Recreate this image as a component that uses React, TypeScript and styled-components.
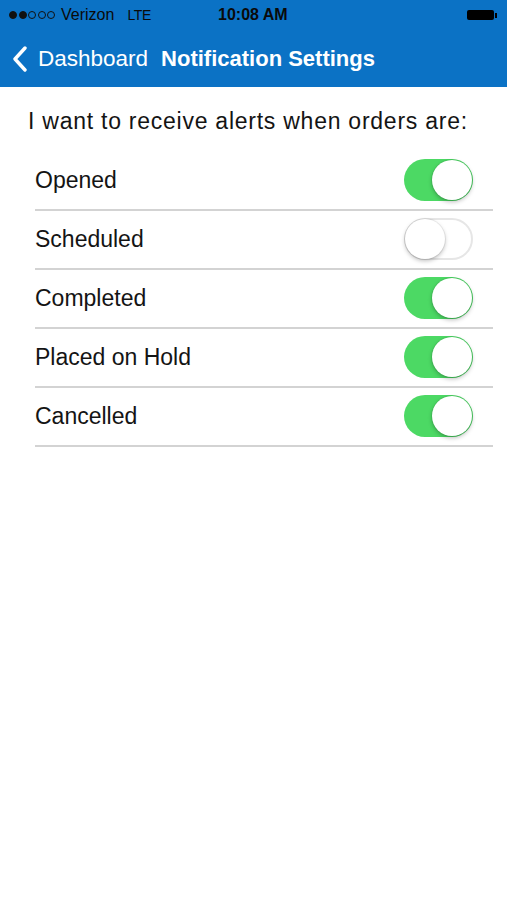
import { useState } from 'react';
import styled, { createGlobalStyle } from 'styled-components';

const GlobalStyle = createGlobalStyle`
  html, body { margin: 0; padding: 0; background: #ffffff; }
  body { font-family: "Liberation Sans", Arial, sans-serif; }
`;

const Screen = styled.div`
  width: 507px;
  height: 900px;
  background: #ffffff;
  display: flex;
  flex-direction: column;
`;

const Header = styled.header`
  background: #0b72c5;
  height: 87px;
  display: flex;
  flex-direction: column;
`;

const StatusBar = styled.div`
  height: 30px;
  display: flex;
  align-items: center;
  padding: 0 10px 0 9px;
  color: #0a0a0a;
  font-size: 16px;
`;

const Carrier = styled.div`
  display: flex;
  align-items: center;
  width: 209px;
`;

const Dot = styled.span<{ $filled: boolean }>`
  width: 8px;
  height: 8px;
  border-radius: 50%;
  box-sizing: border-box;
  border: 1px solid #111;
  background: ${p => (p.$filled ? '#111' : 'transparent')};
`;

const Dots = styled.div`
  display: flex;
  align-items: center;
  gap: 1.5px;
  margin-right: 6px;
`;

const Network = styled.span`
  margin-left: 13px;
  font-size: 14px;
  letter-spacing: -0.3px;
`;

const Time = styled.div`
  font-weight: bold;
  font-size: 16px;
  flex: 1;
`;

const Battery = styled.div`
  display: flex;
  align-items: center;
`;

const BatteryBody = styled.div`
  width: 27px;
  height: 10px;
  background: #000;
  border-radius: 2px;
`;

const BatteryTip = styled.div`
  width: 2px;
  height: 5px;
  background: #000;
  margin-left: 1px;
`;

const NavBar = styled.nav`
  flex: 1;
  display: flex;
  align-items: center;
  padding: 0 0 0 12px;
  color: #ffffff;
  font-size: 22.5px;
`;

const Back = styled.div`
  display: flex;
  align-items: center;
  gap: 10px;
`;

const Title = styled.div`
  font-weight: bold;
  font-size: 22px;
  margin-left: 13px;
`;

const Content = styled.main`
  padding: 20px 14px 0 28px;
`;

const Prompt = styled.p`
  margin: 0 0 17px;
  font-size: 23px;
  line-height: 28px;
  letter-spacing: 0.75px;
  color: #141414;
`;

const List = styled.ul`
  list-style: none;
  margin: 0;
  padding: 0 0 0 7px;
`;

const Row = styled.li`
  height: 57px;
  display: flex;
  align-items: center;
  justify-content: space-between;
  border-bottom: 2px solid #d3d3d3;
  font-size: 23px;
  color: #141414;
  padding-right: 20px;
`;

const Switch = styled.button<{ $on: boolean }>`
  position: relative;
  width: 69px;
  height: 42px;
  border-radius: 21px;
  padding: 0;
  margin-top: -2px;
  cursor: pointer;
  box-sizing: border-box;
  border: ${p => (p.$on ? 'none' : '2px solid #e6e6e6')};
  background: ${p => (p.$on ? '#4cd964' : '#ffffff')};
`;

const Knob = styled.span<{ $on: boolean }>`
  position: absolute;
  top: ${p => (p.$on ? '1px' : '-1px')};
  left: ${p => (p.$on ? '28px' : '-1px')};
  width: 40px;
  height: 40px;
  border-radius: 50%;
  background: #ffffff;
  box-shadow: 0 2px 4px rgba(0, 0, 0, 0.25), 0 0 0 1px rgba(0, 0, 0, 0.06);
`;

const items = [
  { label: 'Opened', on: true },
  { label: 'Scheduled', on: false },
  { label: 'Completed', on: true },
  { label: 'Placed on Hold', on: true },
  { label: 'Cancelled', on: true },
];

export default function App() {
  const [state, setState] = useState(items.map(i => i.on));

  return (
    <Screen>
      <GlobalStyle />
      <Header>
        <StatusBar>
          <Carrier>
            <Dots>
              {[true, true, false, false, false].map((f, i) => (
                <Dot key={i} $filled={f} />
              ))}
            </Dots>
            <span>Verizon</span>
            <Network>LTE</Network>
          </Carrier>
          <Time>10:08 AM</Time>
          <Battery>
            <BatteryBody />
            <BatteryTip />
          </Battery>
        </StatusBar>
        <NavBar>
          <Back>
            <svg width="16" height="26" viewBox="0 0 16 26">
              <path d="M13 2 L3 13 L13 24" fill="none" stroke="#fff" strokeWidth="3.4" strokeLinecap="round" strokeLinejoin="round" />
            </svg>
            <span>Dashboard</span>
          </Back>
          <Title>Notification Settings</Title>
        </NavBar>
      </Header>
      <Content>
        <Prompt>I want to receive alerts when orders are:</Prompt>
        <List>
          {items.map((item, i) => (
            <Row key={item.label}>
              <span>{item.label}</span>
              <Switch
                $on={state[i]}
                onClick={() => setState(s => s.map((v, j) => (j === i ? !v : v)))}
              >
                <Knob $on={state[i]} />
              </Switch>
            </Row>
          ))}
        </List>
      </Content>
    </Screen>
  );
}
